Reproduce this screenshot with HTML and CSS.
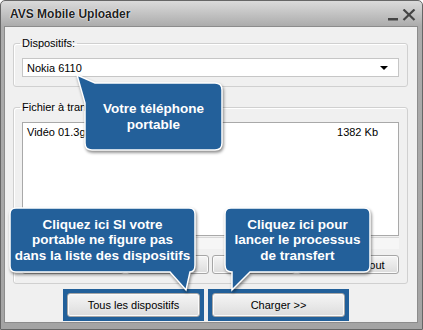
FILE: index.html
```html
<!DOCTYPE html>
<html lang="fr">
<head>
  <meta charset="UTF-8">
  <title>AVS Mobile Uploader</title>
  <link rel="stylesheet" href="styles.css">
</head>
<body>

<div class="window">
  <div class="titlebar">
    <span class="title">AVS Mobile Uploader</span>
    <svg class="controls" width="28" height="12" viewBox="0 0 28 12">
      <rect x="0" y="9" width="10" height="2.5" fill="#444"/>
      <path d="M15.5 0.5 L26.5 11 M26.5 0.5 L15.5 11" stroke="#444" stroke-width="2.2" fill="none"/>
    </svg>
  </div>

  <div class="client">
    <fieldset class="group">
      <legend>Dispositifs:</legend>
      <div class="combo">
        <span>Nokia 6110</span>
        <span class="arrow"></span>
      </div>
    </fieldset>

    <fieldset class="group files">
      <legend>Fichier à transférer:</legend>
      <div class="filelist">
        <div class="file"><span>Vidéo 01.3gp</span><span>1382 Kb</span></div>
      </div>
      <div class="progress"></div>
      <div class="file-actions">
        <button class="btn">Ajouter</button>
        <button class="btn">Supprimer</button>
        <button class="btn">Lecture</button>
        <button class="btn">Supprimer tout</button>
      </div>
    </fieldset>

    <div class="actions">
      <div class="highlight"><button class="btn big">Tous les dispositifs</button></div>
      <div class="highlight"><button class="btn big">Charger &gt;&gt;</button></div>
    </div>
  </div>
</div>

<!-- bulles d'aide -->
<div class="callout phone">
  <svg width="148" height="78" viewBox="0 0 148 78">
    <path d="M1,1 L19,9 H139 Q146,9 146,16 V69 Q146,76 139,76 H16 Q9,76 9,69 V29 Z"/>
  </svg>
  <div class="callout-text">Votre téléphone<br>portable</div>
</div>

<div class="callout devices">
  <svg width="188" height="85" viewBox="0 0 188 85">
    <path d="M7,1 H180 Q186,1 186,7 V58 Q186,65 181,65 L177,83 L161,65 H7 Q1,65 1,59 V7 Q1,1 7,1 Z"/>
  </svg>
  <div class="callout-text">Cliquez ici SI votre<br>portable ne figure pas<br>dans la liste des dispositifs</div>
</div>

<div class="callout upload">
  <svg width="148" height="85" viewBox="0 0 148 85">
    <path d="M7,1 H140 Q146,1 146,7 V59 Q146,65 140,65 H26 L8,83 L8,65 Q1,65 1,58 V7 Q1,1 7,1 Z"/>
  </svg>
  <div class="callout-text">Cliquez ici pour<br>lancer le processus<br>de transfert</div>
</div>

</body>
</html>
```

FILE: styles.css
```css
body {
  margin: 0;
  position: relative;
  font-family: "Liberation Sans", Arial, sans-serif;
  font-size: 11px;
  color: #000;
}

.window {
  width: 423px;
  height: 330px;
  box-sizing: border-box;
  border: 1px solid #666;
  border-radius: 5px 5px 0 0;
  background: linear-gradient(#dadada, #acacac 25px, #a4a4a4);
  display: flex;
  flex-direction: column;
}

.titlebar {
  height: 25px;
  display: flex;
  align-items: center;
  padding: 0 6px 0 9px;
}

.title {
  font-weight: bold;
  font-size: 12px;
  color: #222;
  text-shadow: 0 0 2px #fff, 0 0 1px #fff;
}

.controls {
  margin-left: auto;
  margin-top: 3px;
}

.client {
  flex: 1;
  margin: 0 4px 6px 3px;
  border: 1px solid #8c8c8c;
  background: #f0f0f0;
  padding: 10px 9px 0 8px;
}

/* cadres */
.group {
  margin: 0;
  min-width: 0;
  padding: 8px 8px 9px 8px;
  border: 1px solid #d0d0d0;
  border-radius: 3px;
  box-shadow: inset 1px 1px 0 #fff;
}

.group legend {
  padding: 0 2px;
  margin-left: -2px;
  line-height: 13px;
}

.files {
  margin-top: 14px;
}

.combo {
  height: 19px;
  box-sizing: border-box;
  border: 1px solid #c6c6c6;
  background: #fff;
  display: flex;
  align-items: center;
  padding: 0 4px;
}

.arrow {
  margin-left: auto;
  margin-right: 6px;
  border-left: 4px solid transparent;
  border-right: 4px solid transparent;
  border-top: 4px solid #000;
}

.filelist {
  height: 114px;
  box-sizing: border-box;
  border: 1px solid #a9a9a9;
  background: #fff;
  padding: 3px 20px 0 4px;
}

.file {
  display: flex;
  justify-content: space-between;
  line-height: 13px;
}

.progress {
  height: 12px;
  margin-top: 1px;
  box-sizing: border-box;
  border-top: 1px solid #d8d8d8;
  background: #f6f6f6;
}

.file-actions {
  display: grid;
  grid-template-columns: 102px 82px 83px 1fr;
  gap: 3px;
  margin-top: 6px;
}

.btn {
  height: 19px;
  padding: 0;
  border: 1px solid #a6a6a6;
  border-radius: 3px;
  background: linear-gradient(#f5f5f5, #e9e9e9 50%, #dcdcdc);
  box-shadow: inset 0 0 0 1px #fbfbfb;
  font-family: inherit;
  font-size: 11px;
  color: #000;
}

.actions {
  display: flex;
  gap: 4px;
  margin-top: 5px;
  padding-left: 50px;
}

.highlight {
  background: #22609a;
  padding: 4px;
}

.btn.big {
  width: 133px;
  height: 24px;
  display: block;
}

/* bulles */
.callout {
  position: absolute;
}

.callout svg {
  position: absolute;
  left: 0;
  top: 0;
  filter: drop-shadow(1px 2px 1.5px rgba(0, 0, 0, 0.45));
}

.callout path {
  fill: #23609a;
  stroke: #fff;
  stroke-width: 1.5;
}

.callout-text {
  position: relative;
  display: flex;
  align-items: center;
  justify-content: center;
  text-align: center;
  color: #fff;
  font-weight: bold;
  font-size: 13.5px;
  line-height: 15.5px;
  white-space: nowrap;
}

.phone {
  left: 76px;
  top: 74px;
}

.phone .callout-text {
  margin: 9px 0 0 9px;
  width: 137px;
  height: 67px;
}

.devices {
  left: 9px;
  top: 207px;
}

.devices .callout-text {
  width: 187px;
  height: 66px;
}

.upload {
  left: 224px;
  top: 207px;
}

.upload .callout-text {
  width: 147px;
  height: 66px;
}
```
